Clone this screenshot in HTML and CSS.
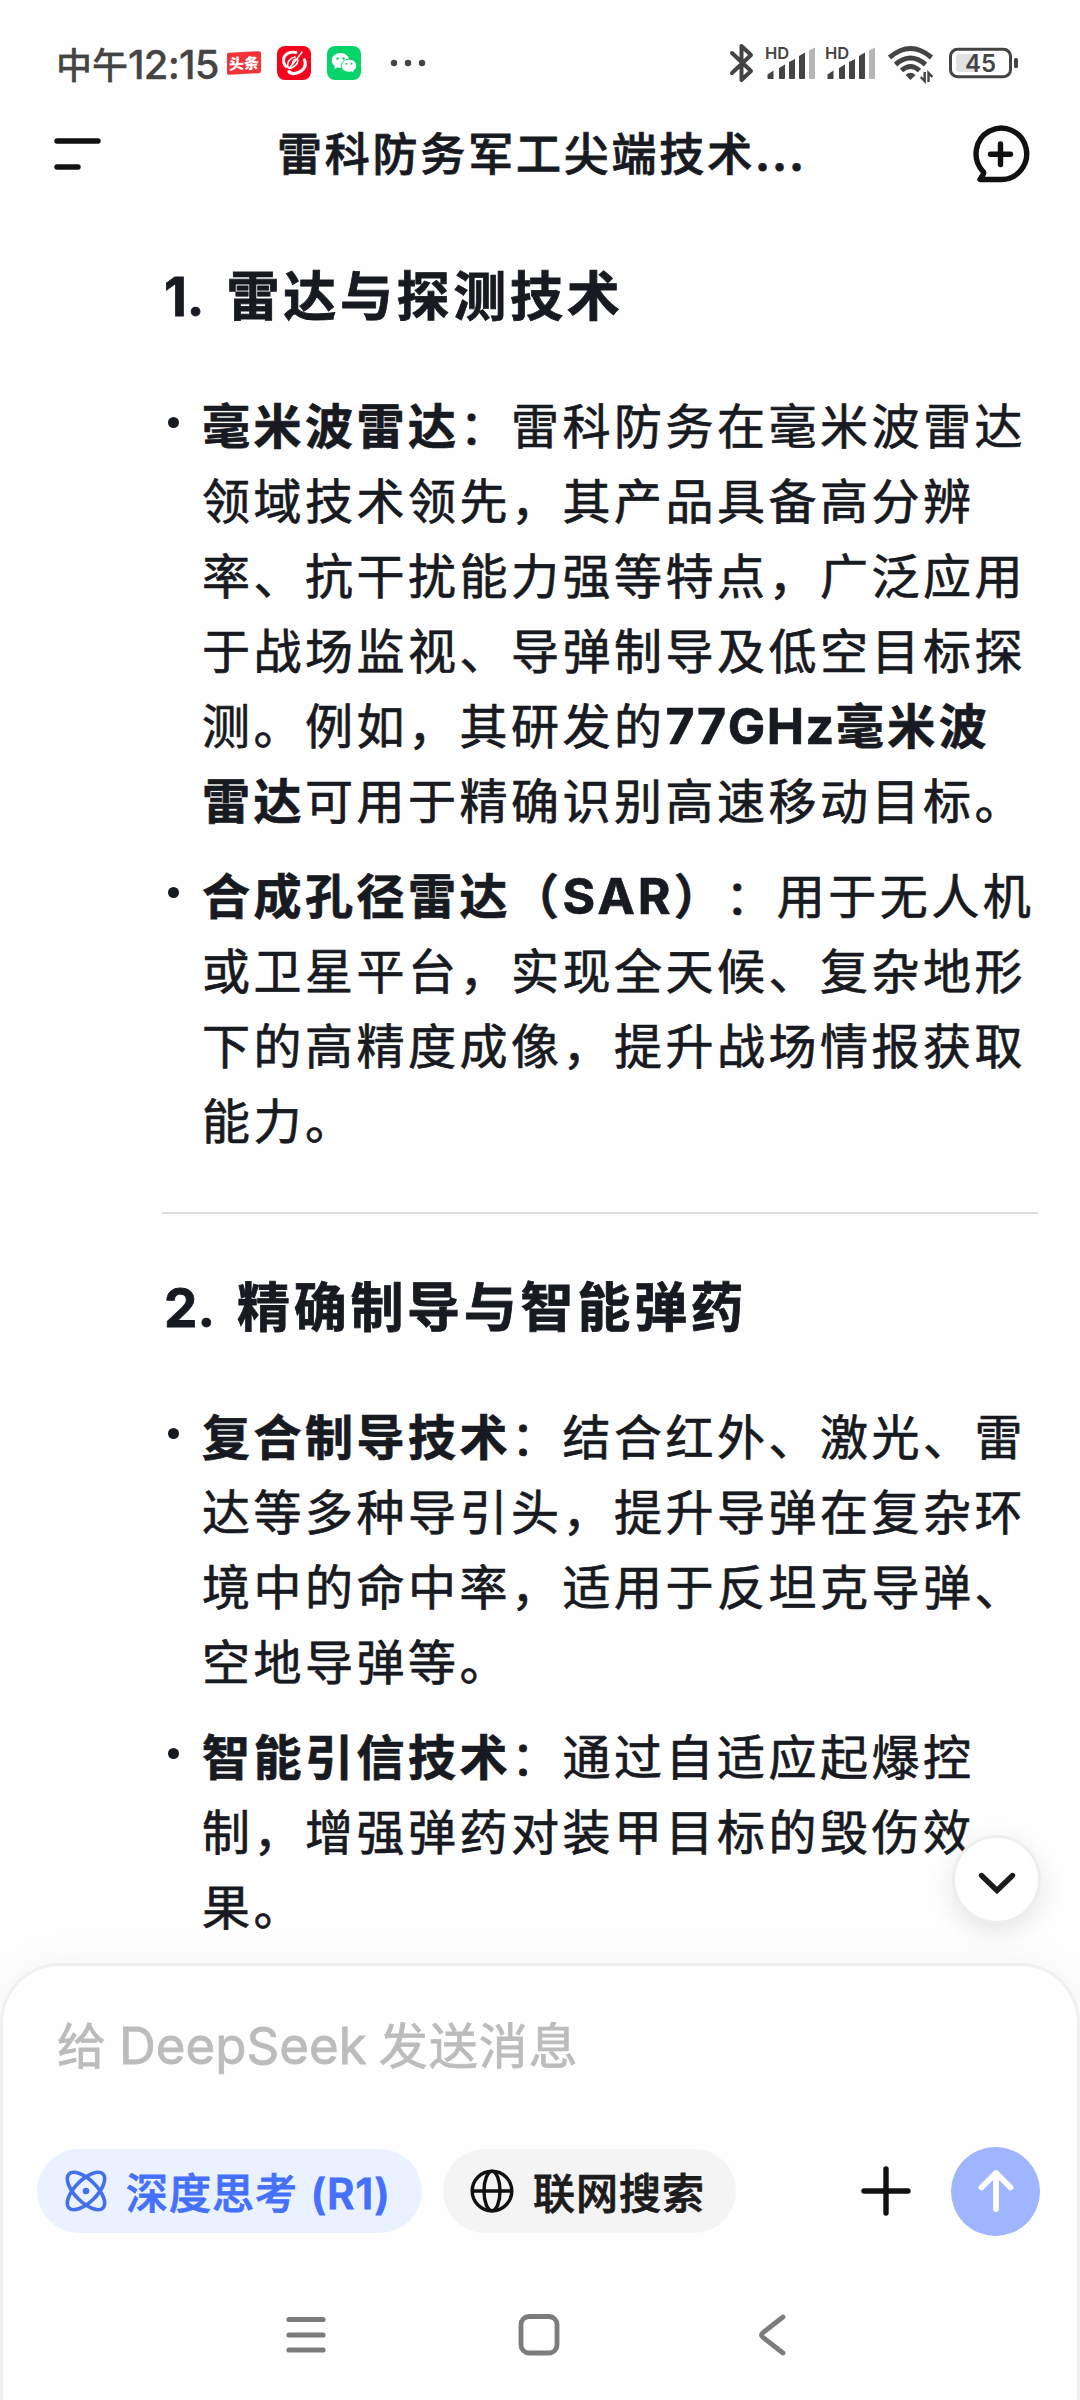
FILE: index.html
```
<!DOCTYPE html>
<html lang="zh-CN">
<head>
    <meta charset="UTF-8">
    <meta name="viewport" content="width=device-width, initial-scale=1.0">
    <title>雷科防务军工尖端技术</title>
    <link rel="stylesheet" href="styles.css">
</head>
<body>
    <div class="statusbar">
        <div class="status-left">
            <span class="clock">中午<span class="digits">12:15</span></span>
            <span class="toutiao"><span>头条</span></span>
            <svg class="app-icon" width="34" height="34" viewBox="0 0 34 34">
                <rect width="34" height="34" rx="8" fill="#f5041c"/>
                <g fill="none" stroke="#fff" stroke-linecap="round">
                    <path d="M19 6.500C11 5 6.500 9.500 6.500 14c0 3 1 5 2.500 6.500" stroke-width="2.800"/>
                    <path d="M27.500 14c2.500 6-1 12-10 13.500-3 .3-4.500-.5-5.500-2" stroke-width="3.200"/>
                    <path d="M25 6C20 13 16 18 12 22" stroke-width="1.400"/>
                    <path d="M18 11c-5 1-7.500 5-7.500 8.500 0 3 3 3.500 5.500 1.500 4-2 5.500-5.500 4.500-7.500-2-1.500-5 1-5 4" stroke-width="1.700"/>
                </g>
            </svg>
            <svg class="app-icon" width="34" height="34" viewBox="0 0 34 34">
                <rect width="34" height="34" rx="8" fill="#06d468"/>
                <path d="M13.500 7C8.500 7 4.700 10.400 4.700 14.500c0 2.400 1.200 4.400 3.200 5.700L7 23l3.300-1.600c1 .3 2.100.5 3.200.5 5 0 8.800-3.300 8.800-7.400S18.500 7 13.500 7z" fill="#fff"/>
                <path d="M22 13.200c-4.400 0-7.800 2.900-7.800 6.500s3.400 6.500 7.800 6.500c1 0 1.900-.2 2.700-.4l2.700 1.400-.7-2.500c1.900-1.200 3-3 3-5 0-3.600-3.400-6.500-7.700-6.500z" fill="#fff" stroke="#06d468"/>
                <g fill="#06d468">
                    <circle cx="10.500" cy="12.500" r="1.200"/><circle cx="16.500" cy="12.500" r="1.200"/>
                    <circle cx="19.400" cy="17.800" r="1"/><circle cx="24.600" cy="17.800" r="1"/>
                </g>
            </svg>
            <svg class="more" width="36" height="8" viewBox="0 0 36 8" fill="#444">
                <circle cx="4" cy="4" r="3.200"/><circle cx="18" cy="4" r="3.200"/><circle cx="32" cy="4" r="3.200"/>
            </svg>
        </div>
        <div class="status-right">
            <svg class="bluetooth" width="24" height="40" viewBox="0 0 24 40" fill="none" stroke="#444" stroke-width="4" stroke-linecap="round" stroke-linejoin="round">
                <path d="M2 10l19 18-9.500 9V3l9.500 9L2 30"/>
            </svg>
            <svg class="signal" width="52" height="36" viewBox="0 0 52 36" fill="#444">
                <text x="0" y="13.500">HD</text>
                <path d="M2.500 33v-3.500l6-4v8.500h-5q-1 0-1-1zM14 33V23l6-3.500V33q0 1-1 1h-4q-1 0-1-1zM24 33V17l6-3v19q0 1-1 1h-4q-1 0-1-1zM34 33V11l6-3.500V33q0 1-1 1h-4q-1 0-1-1z"/>
                <path d="M44 33V5.500l6-3V33q0 1-1 1h-4q-1 0-1-1z" fill="#b5b5b5"/>
            </svg>
            <svg class="signal" width="52" height="36" viewBox="0 0 52 36" fill="#444">
                <text x="0" y="13.500">HD</text>
                <path d="M2.500 33v-3.500l6-4v8.500h-5q-1 0-1-1zM14 33V23l6-3.500V33q0 1-1 1h-4q-1 0-1-1zM24 33V17l6-3v19q0 1-1 1h-4q-1 0-1-1zM34 33V11l6-3.500V33q0 1-1 1h-4q-1 0-1-1z"/>
                <path d="M44 33V5.500l6-3V33q0 1-1 1h-4q-1 0-1-1z" fill="#b5b5b5"/>
            </svg>
            <svg class="wifi" width="48" height="38" viewBox="0 0 48 38" fill="none" stroke="#444" stroke-width="5">
                <path d="M2.500 13.500q21-18 42 0M8.500 20.500q15-13 30 0M14.500 26.500q9-8 18 0"/>
                <path d="M18.500 31q5-4.500 10 0l-5 5z" fill="#444" stroke="none"/>
                <path d="M37.700 28v9l-4-4M41.500 38v-9l4 4" stroke-width="2.400"/>
            </svg>
            <svg class="battery" width="70" height="32" viewBox="0 0 70 32">
                <rect x="7" y="7" width="19" height="18" rx="3" fill="#e2e2e2"/>
                <rect x="1.500" y="2.300" width="60" height="27.400" rx="7" fill="none" stroke="#444" stroke-width="3"/>
                <rect x="65" y="11" width="4" height="10" rx="1.500" fill="#444"/>
                <text x="31.500" y="24.500" text-anchor="middle">45</text>
            </svg>
        </div>
    </div>

    <header class="header">
        <svg class="menu" width="48" height="34" viewBox="0 0 48 34" stroke="#111" stroke-width="5.400" stroke-linecap="round">
            <path d="M3 4h41M3 30h21"/>
        </svg>
        <h1>雷科防务军工尖端技术<span>...</span></h1>
        <svg class="new-chat" width="58" height="58" viewBox="0 0 58 58" fill="none" stroke="#111" stroke-width="5.400" stroke-linecap="round" stroke-linejoin="round">
            <path d="M28.500 54.500A25.300 25.700 0 1 0 11 46.500c1.500 1.500.5 2.500-.5 4L8 54.500z"/>
            <path d="M28.500 19v20.500M18.500 29.200h20"/>
        </svg>
    </header>

    <main class="content">
        <h2><span class="latin">1. </span>雷达与探测技术</h2>
        <ul>
            <li><strong>毫米波雷达</strong>：雷科防务在毫米波雷达<br>领域技术领先，其产品具备高分辨<br>率、抗干扰能力强等特点，广泛应用<br>于战场监视、导弹制导及低空目标探<br>测。例如，其研发的<strong><span class="latin">77GHz</span>毫米波<br>雷达</strong>可用于精确识别高速移动目标。</li>
            <li><strong>合成孔径雷达（<span class="latin sar">SAR</span>）</strong>：用于无人机<br>或卫星平台，实现全天候、复杂地形<br>下的高精度成像，提升战场情报获取<br>能力。</li>
        </ul>
        <hr>
        <h2><span class="latin">2. </span>精确制导与智能弹药</h2>
        <ul>
            <li><strong>复合制导技术</strong>：结合红外、激光、雷<br>达等多种导引头，提升导弹在复杂环<br>境中的命中率，适用于反坦克导弹、<br>空地导弹等。</li>
            <li><strong>智能引信技术</strong>：通过自适应起爆控<br>制，增强弹药对装甲目标的毁伤效<br>果。</li>
        </ul>
        <button class="scroll-down">
            <svg width="40" height="24" viewBox="0 0 40 24" fill="none" stroke="#1c1c1c" stroke-width="5.400" stroke-linecap="round" stroke-linejoin="miter">
                <path d="M4.500 4.500L20 19.500l15.500-15"/>
            </svg>
        </button>
    </main>

    <footer class="composer">
        <div class="placeholder">给 <span>DeepSeek</span> 发送消息</div>
        <div class="tools">
            <div class="chip active">
                <svg width="42" height="42" viewBox="0 0 42 42" fill="none" stroke="#4470ee" stroke-width="3.600">
                    <ellipse cx="21" cy="21" rx="24" ry="11" transform="rotate(45 21 21)"/>
                    <ellipse cx="21" cy="21" rx="24" ry="11" transform="rotate(-45 21 21)"/>
                    <circle cx="21" cy="21" r="3.300" fill="#4470ee" stroke="none"/>
                </svg>
                <span>深度思考 <span class="r1">(R1)</span></span>
            </div>
            <div class="chip">
                <svg width="44" height="44" viewBox="0 0 44 44" fill="none" stroke="#111" stroke-width="3.400">
                    <circle cx="22" cy="22" r="19.800"/>
                    <ellipse cx="22" cy="22" rx="8" ry="19.800"/>
                    <path d="M2 22h40"/>
                </svg>
                <span>联网搜索</span>
            </div>
            <svg class="plus" width="50" height="50" viewBox="0 0 50 50" stroke="#111" stroke-width="5.400" stroke-linecap="round">
                <path d="M25 3v44M3 25h44"/>
            </svg>
            <div class="send">
                <svg width="40" height="46" viewBox="0 0 40 46" fill="none" stroke="#fff" stroke-width="5.800" stroke-linecap="round" stroke-linejoin="round">
                    <path d="M20 41V5M5.500 19.500L20 5l14.500 14.500"/>
                </svg>
            </div>
        </div>
        <div class="navbar">
            <svg width="44" height="44" viewBox="0 0 44 44" stroke="#7c7c7c" stroke-width="5.200" stroke-linecap="round">
                <path d="M5 6.500h34M5 22h34M5 37h34"/>
            </svg>
            <svg width="44" height="44" viewBox="0 0 44 44" fill="none" stroke="#7c7c7c" stroke-width="4.800">
                <rect x="4" y="3.500" width="36" height="36.500" rx="8"/>
            </svg>
            <svg width="44" height="44" viewBox="0 0 44 44" fill="none" stroke="#7c7c7c" stroke-width="4.800" stroke-linecap="round">
                <path d="M33 4L13 19.500q-3 2.500 0 5L33 40"/>
            </svg>
        </div>
    </footer>
</body>
</html>
```

FILE: styles.css
```
* {
    box-sizing: border-box;
}
body {
    margin: 0;
    width: 1080px;
    height: 2400px;
    display: flex;
    flex-direction: column;
    overflow: hidden;
    background: #fefefe;
    color: #181a22;
    font-family: 'Noto Sans CJK SC', sans-serif;
    text-spacing-trim: space-all;
}
svg {
    display: block;
    flex: none;
    overflow: visible;
}

/* Status bar */
.statusbar {
    height: 104px;
    padding: 22px 61px 0 56px;
    display: flex;
    justify-content: space-between;
    align-items: center;
    color: #444;
}
.status-left,
.status-right {
    display: flex;
    align-items: center;
}
.clock {
    width: 171px;
    font-size: 36px;
    font-weight: 500;
    line-height: 50px;
    white-space: nowrap;
    -webkit-text-stroke: 0.3px #444;
}
.digits {
    font-family: Inter, sans-serif;
    font-size: 40px;
    letter-spacing: -0.8px;
    line-height: 0;
}
.toutiao {
    width: 34px;
    height: 22px;
    display: flex;
    align-items: center;
    justify-content: center;
    background: #f0343a;
    border-radius: 2px;
    color: #fff;
    font-size: 15px;
    font-weight: 900;
    line-height: 20px;
    transform: skewY(-3deg);
}
.app-icon {
    margin-left: 16px;
}
.more {
    margin-left: 29px;
}
.signal {
    margin-left: 8px;
}
.bluetooth + .signal {
    margin-left: 11px;
}
.signal text {
    font: 600 16.500px Inter, sans-serif;
}
.wifi {
    margin-left: 10px;
}
.battery {
    margin-left: 14px;
}
.battery text {
    font: 600 24px Inter, sans-serif;
    fill: #444;
}

/* Header */
.header {
    height: 100px;
    padding: 0 50px 0 54px;
    display: flex;
    align-items: center;
    justify-content: space-between;
}
.header h1 {
    margin: 0 0 2px 9px;
    font-size: 45px;
    font-weight: 500;
    letter-spacing: 2.800px;
    line-height: 60px;
    white-space: nowrap;
    -webkit-text-stroke: 0.800px #181a22;
}
.header h1 span {
    font-family: Inter, sans-serif;
    font-weight: 700;
    letter-spacing: 2px;
}

/* Answer */
.content {
    position: relative;
    height: 1759px;
    padding: 49px 42px 0 162px;
}
.content h2 {
    margin: 0;
    padding-left: 2px;
    font-size: 53px;
    font-weight: 700;
    letter-spacing: 3.700px;
    line-height: 80px;
    -webkit-text-stroke: 0.800px #181a22;
}
.content ul {
    margin: 53px 0 0;
    padding: 0;
    list-style: none;
}
.content li {
    position: relative;
    margin-bottom: 20px;
    padding-left: 40px;
    font-size: 48px;
    letter-spacing: 3.500px;
    line-height: 75px;
    white-space: nowrap;
    -webkit-text-stroke: 0.700px #181a22;
}
.content li::before {
    content: "";
    position: absolute;
    left: 6px;
    top: 31px;
    width: 11px;
    height: 11px;
    border-radius: 50%;
    background: #181a22;
}
.content hr {
    height: 2px;
    margin: 56px 0 50px;
    border: none;
    background: #dcdcdc;
}
.latin {
    font-family: Inter, sans-serif;
    line-height: 0;
}
.content h2 .latin {
    letter-spacing: 0;
    word-spacing: 11px;
    white-space: pre;
}
.content li .latin {
    font-size: 50px;
    letter-spacing: 1.500px;
}
.content li .sar {
    letter-spacing: 3px;
}
.scroll-down {
    position: absolute;
    left: 952px;
    top: 1631px;
    width: 89px;
    height: 89px;
    padding: 6px 0 0;
    display: flex;
    align-items: center;
    justify-content: center;
    background: #fff;
    border: 3px solid #eee;
    border-radius: 50%;
    box-shadow: 0 8px 26px rgba(0, 0, 0, 0.1);
}

/* Input panel */
.composer {
    flex: 1;
    padding: 43px 37px 0 34px;
    background: #fefefe;
    border: 3px solid #f0f0f0;
    border-bottom: none;
    border-radius: 60px 60px 0 0;
    box-shadow: 0 -6px 36px rgba(0, 0, 0, 0.04);
}
.placeholder {
    padding-left: 20px;
    font-size: 49px;
    letter-spacing: 1px;
    line-height: 68px;
    color: #bbbcbe;
    white-space: pre;
    -webkit-text-stroke: 0.800px #bbbcbe;
}
.placeholder span {
    font-family: Inter, sans-serif;
    font-size: 51px;
    letter-spacing: 0;
    line-height: 0;
}
.tools {
    height: 90px;
    margin-top: 69px;
    display: flex;
    align-items: center;
}
.chip {
    width: 293px;
    height: 84px;
    padding-left: 27px;
    display: flex;
    align-items: center;
    gap: 19px;
    border-radius: 42px;
    background: #f4f4f4;
    color: #1c1c1c;
    font-size: 42px;
    font-weight: 500;
    letter-spacing: 1px;
    line-height: 60px;
    white-space: nowrap;
    -webkit-text-stroke: 0.800px;
}
.chip.active {
    width: 385px;
    margin-right: 21px;
    padding-left: 28px;
    background: #ebf2ff;
    color: #4470fb;
}
.r1 {
    margin-left: 2px;
    font-family: Inter, sans-serif;
    font-weight: 600;
    letter-spacing: 1px;
    line-height: 0;
}
.plus {
    margin-left: 125px;
}
.send {
    width: 89px;
    height: 89px;
    margin-left: auto;
    display: flex;
    align-items: center;
    justify-content: center;
    border-radius: 50%;
    background: #a0b5ff;
}
.navbar {
    margin-top: 77px;
    padding: 0 246px 0 247px;
    display: flex;
    justify-content: space-between;
}
```
